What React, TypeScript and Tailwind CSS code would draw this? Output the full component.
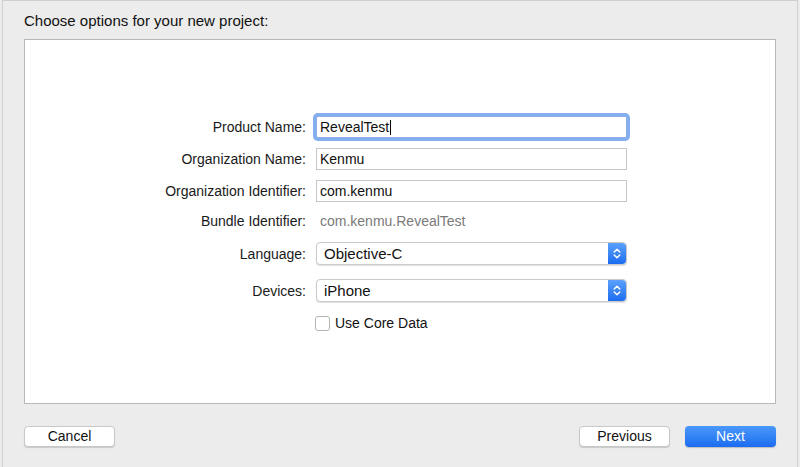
import React from "react";

function Stepper() {
    return (
        <div className="flex h-full w-[18px] items-center justify-center rounded-r-[4px] bg-gradient-to-b from-[#5aa0fb] to-[#1b6cf0]">
            <svg width="8" height="13" viewBox="0 0 8 13" fill="none">
                <path d="M1.2 5 L4 2.2 L6.8 5" stroke="white" strokeWidth="1.5" strokeLinecap="round" strokeLinejoin="round" />
                <path d="M1.2 8 L4 10.8 L6.8 8" stroke="white" strokeWidth="1.5" strokeLinecap="round" strokeLinejoin="round" />
            </svg>
        </div>
    );
}

function Select({ value }: { value: string }) {
    return (
        <div className="flex h-[23px] w-[311px] items-center justify-between rounded-[4px] border border-[#c9c9c9] bg-white shadow-[0_1px_1px_rgba(0,0,0,0.12)]">
            <span className="pl-[7px] text-[15px] leading-none text-[#111]">{value}</span>
            <Stepper />
        </div>
    );
}

function TextField({ value, focused }: { value: string; focused?: boolean }) {
    if (focused) {
        return (
            <div className="flex h-[22px] w-[311px] items-center rounded-[2px] border border-[#8fb0e0] bg-white pl-[3px] text-[14px] leading-none text-[#111] shadow-[0_0_0_3px_#83aef0]">
                {value}
                <span className="ml-[1px] inline-block h-[15px] w-[1px] bg-black" />
            </div>
        );
    }
    return (
        <div className="flex h-[22px] w-[311px] items-center border border-[#c6c6c6] bg-white pl-[3px] text-[14px] leading-none text-[#111]">
            {value}
        </div>
    );
}

function Row({ label, children, className }: { label: string; children: React.ReactNode; className: string }) {
    return (
        <div className={`flex items-center ${className}`}>
            <div className="w-[281px] text-right text-[14px] leading-none text-[#1a1a1a]">{label}</div>
            <div className="ml-[10px] flex h-full items-center">{children}</div>
        </div>
    );
}

function Button({ label, primary, className }: { label: string; primary?: boolean; className?: string }) {
    return (
        <button
            className={
                primary
                    ? `flex h-[21px] w-[91px] items-center justify-center rounded-[4px] bg-gradient-to-b from-[#4b98fa] to-[#1a6cf0] text-[14px] text-white shadow-[0_1px_1px_rgba(0,0,0,0.2)] ${className ?? ""}`
                    : `flex h-[21px] w-[91px] items-center justify-center rounded-[4px] border border-[#c8c8c8] bg-white text-[14px] text-[#111] shadow-[0_1px_1px_rgba(0,0,0,0.15)] ${className ?? ""}`
            }
        >
            {label}
        </button>
    );
}

export default function App() {
    return (
        <div
            className="h-[467px] w-[800px] bg-[#ececec] pl-[2px] pr-[2px]"
            style={{ fontFamily: '"Liberation Sans", Arial, sans-serif' }}
        >
            <div className="flex h-full flex-col border-x border-t border-[#cfcfcf] px-[21px]">
                <h1 className="mt-[11px] text-[15px] leading-[17px] text-[#111]">Choose options for your new project:</h1>
                <div className="mt-[10px] flex h-[365px] flex-col border border-[#b8b8b8] bg-white pt-[76px]">
                    <Row label="Product Name:" className="h-[22px]">
                        <TextField value="RevealTest" focused />
                    </Row>
                    <Row label="Organization Name:" className="mt-[10px] h-[22px]">
                        <TextField value="Kenmu" />
                    </Row>
                    <Row label="Organization Identifier:" className="mt-[10px] h-[22px]">
                        <TextField value="com.kenmu" />
                    </Row>
                    <Row label="Bundle Identifier:" className="mt-[10px] h-[18px]">
                        <span className="pl-[4px] text-[14px] leading-none text-[#7a7a7a]">com.kenmu.RevealTest</span>
                    </Row>
                    <Row label="Language:" className="mt-[12px] h-[23px]">
                        <Select value="Objective-C" />
                    </Row>
                    <Row label="Devices:" className="mt-[14px] h-[23px]">
                        <Select value="iPhone" />
                    </Row>
                    <div className="ml-[290px] mt-[13px] flex h-[16px] items-center">
                        <span className="h-[15px] w-[15px] rounded-[3px] border border-[#b4b4b4] bg-white" />
                        <span className="ml-[5px] text-[14px] leading-none text-[#111]">Use Core Data</span>
                    </div>
                </div>
                <div className="mt-[22px] flex items-center">
                    <Button label="Cancel" />
                    <Button label="Previous" className="ml-auto" />
                    <Button label="Next" primary className="ml-[15px]" />
                </div>
            </div>
        </div>
    );
}
